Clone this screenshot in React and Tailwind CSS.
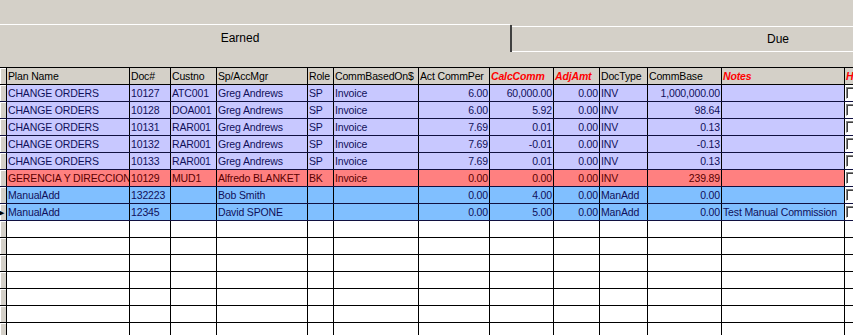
import React from "react";

const cols = [
  { key: "plan", label: "Plan Name", w: "w-[123px]" },
  { key: "doc", label: "Doc#", w: "w-[41px]" },
  { key: "cust", label: "Custno", w: "w-[46px]" },
  { key: "sp", label: "Sp/AccMgr", w: "w-[91px]" },
  { key: "role", label: "Role", w: "w-[26px]" },
  { key: "based", label: "CommBasedOn$", w: "w-[85px]" },
  { key: "act", label: "Act CommPer", w: "w-[71px]", right: true },
  { key: "calc", label: "CalcComm", w: "w-[64px]", right: true, hot: true },
  { key: "adj", label: "AdjAmt", w: "w-[46px]", right: true, hot: true },
  { key: "type", label: "DocType", w: "w-[48px]" },
  { key: "base", label: "CommBase", w: "w-[74px]", right: true },
  { key: "notes", label: "Notes", w: "w-[123px]", hot: true },
];

const rows = [
  { kind: "co", plan: "CHANGE ORDERS", doc: "10127", cust: "ATC001", sp: "Greg Andrews", role: "SP", based: "Invoice", act: "6.00", calc: "60,000.00", adj: "0.00", type: "INV", base: "1,000,000.00", notes: "" },
  { kind: "co", plan: "CHANGE ORDERS", doc: "10128", cust: "DOA001", sp: "Greg Andrews", role: "SP", based: "Invoice", act: "6.00", calc: "5.92", adj: "0.00", type: "INV", base: "98.64", notes: "" },
  { kind: "co", plan: "CHANGE ORDERS", doc: "10131", cust: "RAR001", sp: "Greg Andrews", role: "SP", based: "Invoice", act: "7.69", calc: "0.01", adj: "0.00", type: "INV", base: "0.13", notes: "" },
  { kind: "co", plan: "CHANGE ORDERS", doc: "10132", cust: "RAR001", sp: "Greg Andrews", role: "SP", based: "Invoice", act: "7.69", calc: "-0.01", adj: "0.00", type: "INV", base: "-0.13", notes: "" },
  { kind: "co", plan: "CHANGE ORDERS", doc: "10133", cust: "RAR001", sp: "Greg Andrews", role: "SP", based: "Invoice", act: "7.69", calc: "0.01", adj: "0.00", type: "INV", base: "0.13", notes: "" },
  { kind: "ger", plan: "GERENCIA Y DIRECCION", doc: "10129", cust: "MUD1", sp: "Alfredo BLANKET", role: "BK", based: "Invoice", act: "0.00", calc: "0.00", adj: "0.00", type: "INV", base: "239.89", notes: "" },
  { kind: "man", plan: "ManualAdd", doc: "132223", cust: "", sp: "Bob Smith", role: "", based: "", act: "0.00", calc: "4.00", adj: "0.00", type: "ManAdd", base: "0.00", notes: "" },
  { kind: "man", plan: "ManualAdd", doc: "12345", cust: "", sp: "David SPONE", role: "", based: "", act: "0.00", calc: "5.00", adj: "0.00", type: "ManAdd", base: "0.00", notes: "Test Manual Commission", current: true },
];

const rowStyle = {
  co: "bg-[#c8c8ff] text-[#10105a]",
  ger: "bg-[#ff8080] text-[#5a0000]",
  man: "bg-[#80bfff] text-[#10105a]",
};

function CheckBox() {
  return (
    <div className="ml-[1px] mt-[2px] h-[12px] w-[12px] border border-t-[#808080] border-l-[#808080] border-r-white border-b-white bg-white shadow-[inset_1px_1px_0_#404040]" />
  );
}

function Selector({ current }) {
  return (
    <div className="flex h-full w-[7px] shrink-0 items-center border-r border-black bg-[#d4d0c8] shadow-[inset_1px_1px_0_#ffffff]">
      {current && <span className="ml-[-1px] text-[7px] leading-none text-black">▶</span>}
    </div>
  );
}

function Row({ row }) {
  const color = row ? rowStyle[row.kind] : "bg-white";
  return (
    <div className={`flex h-[17px] border-b ${row ? "border-[#101040]" : "border-black"}`}>
      <Selector current={row?.current} />
      {cols.map((c) => (
        <div
          key={c.key}
          className={`${c.w} ${color} shrink-0 overflow-hidden whitespace-nowrap border-r border-black px-[1px] leading-[17px] ${c.right ? "text-right" : ""}`}
        >
          {row ? row[c.key] : ""}
        </div>
      ))}
      <div className="flex-1 bg-white">{row && <CheckBox />}</div>
    </div>
  );
}

export default function App() {
  return (
    <div className="h-[335px] w-[853px] overflow-hidden bg-[#d4d0c8] text-[10.5px] tracking-[-0.15px] text-black [font-family:'Liberation_Sans',Arial,sans-serif]">
      <div className="h-[24px]" />
      <div className="flex h-[28px] items-start">
        <div className="flex h-[28px] w-[510px] items-center justify-center border-t border-white pb-[1px] pr-[30px] text-[12px] tracking-normal">
          Earned
        </div>
        <div className="mt-[1px] h-[27px] w-[2px] bg-[#404040]" />
        <div className="mt-[2px] flex h-[26px] flex-1 items-center justify-end border-y border-white pr-[64px] text-[12px] tracking-normal">
          Due
        </div>
      </div>
      <div className="h-[15px]" />
      <div className="flex h-[18px] border-y border-black">
        <div className="w-[7px] shrink-0 border-r border-black bg-[#d4d0c8] shadow-[inset_1px_1px_0_#ffffff]" />
        {cols.map((c) => (
          <div
            key={c.key}
            className={`${c.w} shrink-0 overflow-hidden whitespace-nowrap border-r border-black bg-[#d4d0c8] px-[1px] leading-[16px] ${c.hot ? "font-bold italic text-[#ff0000]" : ""}`}
          >
            {c.label}
          </div>
        ))}
        <div className="flex-1 bg-[#d4d0c8] px-[1px] font-bold italic leading-[16px] text-[#ff0000]">H</div>
      </div>
      {rows.map((r, i) => (
        <Row key={i} row={r} />
      ))}
      {Array.from({ length: 7 }).map((_, i) => (
        <Row key={"e" + i} />
      ))}
    </div>
  );
}
